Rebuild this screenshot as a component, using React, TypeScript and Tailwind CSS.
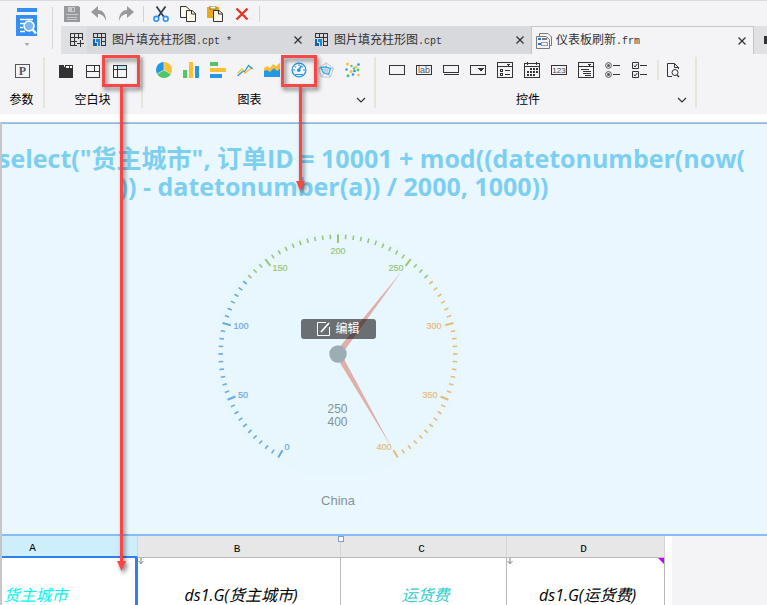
import React from "react";

const INK = "#333333";

function Icon({ children, label, crisp = true }: { children: React.ReactNode; label: string; crisp?: boolean }) {
    return (
        <button type="button" aria-label={label} className="w-4 h-4 shrink-0">
            <svg width="16" height="16" viewBox="0 0 16 16" fill="none" stroke={INK} shapeRendering={crisp ? "crispEdges" : "auto"}>
                {children}
            </svg>
        </button>
    );
}

function Close({ name }: { name: string }) {
    return (
        <button type="button" aria-label={"close " + name} className="w-2 h-2 shrink-0">
            <svg width="8" height="8" viewBox="0 0 8 8" stroke={INK} strokeWidth="1.3">
                <path d="M0.5 0.5L7.5 7.5M7.5 0.5L0.5 7.5" />
            </svg>
        </button>
    );
}

function CptIcon() {
    return (
        <svg width="14" height="14" viewBox="0 0 14 14" fill="none" className="shrink-0" shapeRendering="crispEdges">
            <path d="M0.5 5V0.5H12.5V12.5H8M0 4.5H12M4.5 0V4M8.5 0V13M9 8.5H12" stroke={INK} />
            <path d="M0 6H2V13H0zM2 10H4V13H2z" fill="#1d5fa8" />
            <path d="M3 6H7V13H5V9H3z" fill="#1a8ad6" />
        </svg>
    );
}

function FrmIcon() {
    return (
        <svg width="16" height="16" viewBox="0 0 16 16" fill="none" className="shrink-0">
            <path d="M3.5 3V0.5H12L15.5 4V12.5H13" stroke="#77797d" />
            <path d="M0.5 3.5H10L13.5 6.5V15.5H0.5z" fill="#f4f4f7" stroke="#77797d" />
            <path d="M2 5H5V7H2zM2 10H5V12H2z" fill="#2a76c4" />
            <rect x="6.5" y="5.5" width="4" height="1" stroke="#77797d" />
            <rect x="5.5" y="9.5" width="6" height="3" stroke="#9a9ca0" />
        </svg>
    );
}

function Tab({ icon, title, ext, active }: { icon: React.ReactNode; title: string; ext: string; active?: boolean }) {
    return (
        <div className={active ? "w-[222px] shrink-0 flex items-center gap-1 pl-1 pr-[7px] bg-[#f4f4f7] border-l border-t border-[#c6c7cb]" : "w-[222px] shrink-0 flex items-center gap-[5px] pl-[6px] pr-[7px]"}>
            {icon}
            <button type="button" className="grow text-left text-xs text-[#333333] whitespace-pre">
                {title}<span className="font-['Liberation_Mono'] text-[10px]">{ext}</span>
            </button>
            <Close name={title} />
        </div>
    );
}

function Chevron({ label }: { label: string }) {
    return (
        <button type="button" aria-label={label} className="absolute right-2 bottom-1 w-[10px] h-2">
            <svg width="10" height="8" viewBox="0 0 10 8" fill="none" stroke={INK} strokeWidth="1.2">
                <path d="M1 2L5 6L9 2" />
            </svg>
        </button>
    );
}

function Group({ name, className, more, children }: { name: string; className: string; more?: boolean; children: React.ReactNode }) {
    return (
        <section className={"relative shrink-0 h-[51px] flex flex-col justify-between border-r-2 border-[#e6e5dc] " + className}>
            <div className="flex gap-[11px] pt-[5px]">{children}</div>
            <span className="text-center text-xs leading-4 text-black">{name}</span>
            {more && <Chevron label={name} />}
        </section>
    );
}

function QuickBar() {
    return (
        <div className="h-[25px] flex items-center gap-[11px] pl-[3px]">
            <Icon label="save">
                <path d="M0 0H14L16 2V16H0z" fill="#98999d" stroke="none" />
                <path d="M4 1H11V6H4z" fill="#c9cacd" stroke="none" />
                <path d="M8 2H10V5H8z" fill="#98999d" stroke="none" />
                <path d="M2 8.5H14M3 11.5H13M3 13.5H13" stroke="#c9cacd" />
            </Icon>
            <Icon label="undo" crisp={false}>
                <path d="M0 6L7 0V4C12 4 15 8 15 15C13 10 11 8 7 8V12z" fill="#98999d" stroke="none" />
            </Icon>
            <Icon label="redo" crisp={false}>
                <path d="M16 6L9 0V4C4 4 1 8 1 15C3 10 5 8 9 8V12z" fill="#98999d" stroke="none" />
            </Icon>
            <div className="w-px h-4 bg-[#d2d3d6] -mx-[2px]" />
            <Icon label="cut" crisp={false}>
                <path d="M3.5 0.5L11 11M12.5 0.5L5 11" stroke="#333f4c" strokeWidth="1.8" />
                <circle cx="3.3" cy="12.8" r="2.4" stroke="#2f92ee" strokeWidth="1.6" />
                <circle cx="12.7" cy="12.8" r="2.4" stroke="#2f92ee" strokeWidth="1.6" />
            </Icon>
            <Icon label="copy" crisp={false}>
                <path d="M0.5 0.5H6L9.5 3.5V11.5H0.5z" fill="#fdfaec" />
                <path d="M6.5 4.5H12L15.5 7.5V15.5H6.5z" fill="#fdfaec" />
                <path d="M11.5 4.5V8H15.5" />
            </Icon>
            <Icon label="paste" crisp={false}>
                <path d="M0 1H12V12H0z" fill="#eda91a" stroke="none" />
                <path d="M3 0H9V3H3z" fill="#f8f1dc" stroke="#6d5930" strokeWidth="0.7" />
                <path d="M6.5 4.5H12L15.5 7.5V15.5H6.5z" fill="#fdfaec" />
                <path d="M11.5 4.5V8H15.5" />
            </Icon>
            <Icon label="delete" crisp={false}>
                <path d="M2.5 2.5L13.5 13.5M13.5 2.5L2.5 13.5" stroke="#e6342c" strokeWidth="2.4" />
            </Icon>
            <div className="w-px h-4 bg-[#d2d3d6] -ml-[2px]" />
        </div>
    );
}

function Header() {
    return (
        <header className="flex h-[54px] border-t border-[#d9dadd]">
            <div className="w-[53px] shrink-0 py-[6px]">
                <button type="button" aria-label="menu" className="w-full h-[42px] flex justify-center border-r border-[#d6d7da]">
                    <svg width="22" height="40" viewBox="0 0 22 40" fill="none" className="ml-[2px]">
                        <path d="M1 1H21V5H1zM0 8H21V29H0z" fill="#3390f2" />
                        <path d="M4 12.5H17M4 16.5H8M4 20.5H7M4 24.5H9" stroke="#fff" strokeWidth="1.6" />
                        <circle cx="13" cy="19" r="5" fill="#78b8f8" stroke="#fff" strokeWidth="1.6" />
                        <path d="M16.5 22.5L20 26.5" stroke="#fff" strokeWidth="2.4" />
                        <path d="M8.5 36H13.5L11 39z" fill="#a9aaae" />
                    </svg>
                </button>
            </div>
            <div className="grow min-w-0 pl-2 flex flex-col">
                <QuickBar />
                <nav className="flex h-7 bg-[#d8d9dd] overflow-hidden">
                    <button type="button" aria-label="new" className="w-[26px] shrink-0 flex items-center justify-center bg-[#dfe0e3]">
                        <svg width="14" height="14" viewBox="0 0 14 14" fill="none" stroke={INK} className="ml-[6px]" shapeRendering="crispEdges">
                            <path d="M7 12.5H0.5V0.5H12.5V7M0 4.5H13M0 8.5H7M4.5 0V13M8.5 0V6M10.5 7V14M7 10.5H14" />
                        </svg>
                    </button>
                    <Tab icon={<CptIcon />} title="图片填充柱形图" ext=".cpt *" />
                    <Tab icon={<CptIcon />} title="图片填充柱形图" ext=".cpt" />
                    <Tab icon={<FrmIcon />} title="仪表板刷新" ext=".frm" active />
                    <button type="button" aria-label="tab list" className="grow flex items-center pl-[10px] bg-[#e1e1e3] border-l border-[#c6c7cb]">
                        <span className="w-2 h-2 shrink-0 bg-[#333333]" />
                    </button>
                </nav>
            </div>
        </header>
    );
}

function Ribbon() {
    return (
        <div className="flex h-[60px] pt-[3px] overflow-hidden">
            <Group name="参数" className="w-[45px] pl-[15px] [&>span]:-ml-[15px]">
                <Icon label="parameter">
                    <rect x="0.5" y="2.5" width="14" height="13" stroke="#55565a" />
                    <text x="7.5" y="13" textAnchor="middle" fontSize="12" fontWeight="bold" fontFamily="Liberation Serif" fill="#55565a" stroke="none">P</text>
                </Icon>
            </Group>
            <Group name="空白块" className="w-[98px] pl-[13px] [&>span]:-ml-[14px]">
                <Icon label="tab block">
                    <path d="M1 3H6V5H15V16H1z" fill={INK} stroke="none" />
                    <path d="M7.5 3.5H14.5V6.5H7.5zM11 3V7" fill="#fff" />
                </Icon>
                <Icon label="absolute block">
                    <path d="M1.5 3.5H14.5V15.5H1.5zM1 9.5H15M9.5 3V9" />
                </Icon>
                <Icon label="report block">
                    <path d="M5 3H15V7H5z" fill="#bfe6fa" stroke="none" />
                    <path d="M1.5 3.5H14.5V15.5H1.5zM1 7.5H15M5.5 3V16" />
                </Icon>
            </Group>
            <Group name="图表" className="w-[233px] pl-[13px] [&>span]:-ml-[31px]" more>
                <Icon label="pie" crisp={false}>
                    <path d="M8 8V0A8 8 0 0 1 14.9 12z" fill="#f9bf35" stroke="none" />
                    <path d="M8 8V0A8 8 0 0 0 1.1 12z" fill="#2497e3" stroke="none" />
                    <path d="M8 8L1.1 12A8 8 0 0 0 14.9 12z" fill="#52c564" stroke="none" />
                    <path d="M8 0V8L1.1 12M8 8L14.9 12" stroke="#f4f4f7" strokeWidth="0.6" />
                </Icon>
                <Icon label="column">
                    <path d="M0 8H4V16H0z" fill="#52c564" stroke="none" />
                    <path d="M6 0H10V16H6z" fill="#f9bf35" stroke="none" />
                    <path d="M12 4H16V16H12z" fill="#2497e3" stroke="none" />
                </Icon>
                <Icon label="bar">
                    <path d="M0 0H8V4H0z" fill="#52c564" stroke="none" />
                    <path d="M0 6H16V10H0z" fill="#f9bf35" stroke="none" />
                    <path d="M0 12H12V16H0z" fill="#2497e3" stroke="none" />
                </Icon>
                <Icon label="line" crisp={false}>
                    <path d="M0.5 11.5L5 7L8 11L15.5 5" stroke="#f9bf35" strokeWidth="1.3" />
                    <path d="M0.5 14L5 10L8 9L11.5 3.5L15.5 7" stroke="#2497e3" strokeWidth="1.3" />
                </Icon>
                <Icon label="area" crisp={false}>
                    <path d="M0 6L3 4L6 6L9 2L12 4L16 1V11H0z" fill="#f9bf35" stroke="none" />
                    <path d="M0 9L3 8L6 10L10 6L13 9L16 7V15H0z" fill="#2497e3" stroke="none" />
                </Icon>
                <Icon label="gauge" crisp={false}>
                    <circle cx="8" cy="8" r="6.9" stroke="#2497e3" strokeWidth="1.3" />
                    <path d="M8 1V4M2 8H4M12 8H14M3.5 4L5 5.2M12.5 4L11 5.2M4 12.5H12" stroke="#2497e3" />
                    <path d="M7.8 8L10.5 3.5" stroke="#2497e3" strokeWidth="1.5" />
                    <circle cx="7.8" cy="8.2" r="1.8" fill="#2497e3" stroke="none" />
                </Icon>
                <Icon label="radar" crisp={false}>
                    <path d="M8 0.7L15.3 6.2L12.6 15H3.4L0.7 6.2zM8 0.7V8M15.3 6.2L8 8L12.6 15M3.4 15L8 8L0.7 6.2" stroke="#c3c6cb" />
                    <path d="M3 5.5L8 5L12.5 6.5L10.5 12.5L5.5 11z" stroke="#45aef0" strokeWidth="1.4" />
                    <path d="M6 8L8 6.5L10 8L9 10H7z" stroke="#9ed3f5" />
                </Icon>
                <Icon label="scatter" crisp={false}>
                    <g stroke="none" fill="#f9bf35">
                        <circle cx="2.5" cy="2" r="1.5" /><circle cx="11" cy="5" r="1.3" /><circle cx="6" cy="9.5" r="1.5" /><circle cx="13.5" cy="13" r="1.3" />
                    </g>
                    <g stroke="none" fill="#2497e3">
                        <circle cx="13.5" cy="2.5" r="1.3" /><circle cx="1.5" cy="7.5" r="1.2" /><circle cx="9.5" cy="9" r="1.3" /><circle cx="8" cy="12.5" r="1.3" />
                    </g>
                    <g stroke="none" fill="#52c564">
                        <circle cx="6.5" cy="4" r="1.2" /><circle cx="9" cy="6.5" r="1.2" /><circle cx="13" cy="8" r="1.4" /><circle cx="3" cy="13.8" r="1.5" />
                    </g>
                </Icon>
            </Group>
            <Group name="控件" className="w-[321px] pl-[13px] [&>span]:-ml-[28px]" more>
                <Icon label="text box"><rect x="0.5" y="3.5" width="15" height="9" /></Icon>
                <Icon label="label">
                    <rect x="0.5" y="3.5" width="15" height="9" />
                    <text x="8" y="11" textAnchor="middle" fontSize="9" fontFamily="Liberation Sans" fill="#55565a" stroke="none">lab</text>
                </Icon>
                <Icon label="button"><path d="M0.5 3.5H15.5V10.5H0.5zM1 12.5H16" /></Icon>
                <Icon label="combo box">
                    <rect x="0.5" y="3.5" width="15" height="9" />
                    <path d="M8 6H14L11 10z" fill={INK} stroke="none" />
                </Icon>
                <Icon label="check combo">
                    <path d="M0.5 0.5H15.5V15.5H0.5zM0 4.5H16M3.5 7.5H5.5V9.5H3.5zM3.5 11.5H5.5V13.5H3.5zM8 8.5H13M8 12.5H13" />
                    <path d="M10 2H13L11.5 4z" fill={INK} stroke="none" />
                </Icon>
                <Icon label="date">
                    <path d="M0.5 1.5H15.5V15.5H0.5zM0 4.5H16M3.5 0V3M12.5 0V3" />
                    <path d="M6 7H14M3 10H14M3 13H11" strokeWidth="2" strokeDasharray="2 1" />
                </Icon>
                <Icon label="number">
                    <rect x="0.5" y="3.5" width="15" height="9" />
                    <text x="8" y="11" textAnchor="middle" fontSize="8" fontFamily="Liberation Sans" fill="#444" stroke="none">123</text>
                </Icon>
                <Icon label="tree">
                    <path d="M0.5 0.5H15.5V15.5H0.5zM0 4.5H16M3 7.5H11M5 9.5H13M5 11.5H13M7 13.5H13" />
                    <path d="M10 2H13L11.5 4z" fill={INK} stroke="none" />
                </Icon>
                <Icon label="radio group" crisp={false}>
                    <circle cx="3.5" cy="3.5" r="2.9" stroke="#55565a" /><circle cx="3.5" cy="3.5" r="1.5" fill="#55565a" stroke="none" />
                    <circle cx="3.5" cy="12.5" r="2.9" stroke="#55565a" /><circle cx="3.5" cy="12.5" r="1.5" fill="#55565a" stroke="none" />
                    <path d="M8 3.5H15M8 12.5H15" />
                </Icon>
                <Icon label="check group" crisp={false}>
                    <path d="M0.5 0.5H6.5V6.5H0.5zM0.5 9.5H6.5V15.5H0.5z" />
                    <path d="M2 3.5L3 5L5.2 2M2 12.5L3 14L5.2 11M8 3.5H15M8 12.5H15" />
                </Icon>
                <div className="w-[2px] h-5 bg-[#e6e5dc] -ml-[2px] -mt-[2px] -mr-1" />
                <Icon label="query" crisp={false}>
                    <path d="M6 14.5H1.5V1.5H8.5L12.5 5.5V7M8.5 1.5V5.5H12.5" />
                    <circle cx="9" cy="10.5" r="3" />
                    <path d="M11 13L13 15" strokeWidth="1.5" />
                </Icon>
            </Group>
        </div>
    );
}

const gaugeLabels = [
    { value: 0, x: 77, y: 227, color: "#6aaade" },
    { value: 50, x: 33, y: 175, color: "#6aaade" },
    { value: 100, x: 31, y: 106, color: "#6aaade" },
    { value: 150, x: 70, y: 48, color: "#99c67a" },
    { value: 200, x: 128, y: 31, color: "#99c67a" },
    { value: 250, x: 186, y: 48, color: "#99c67a" },
    { value: 300, x: 224, y: 106, color: "#e6bb7a" },
    { value: 350, x: 220, y: 175, color: "#e6bb7a" },
    { value: 400, x: 174, y: 227, color: "#e6bb7a" },
];

function tickColor(i: number) {
    if (i <= 26) return "#6aaade";
    return i <= 53 ? "#99c67a" : "#e6bb7a";
}

function Gauge() {
    const ticks = Array.from({ length: 81 }, (_, i) => i);
    return (
        <div className="relative w-64 h-[252px]">
            <svg width="256" height="252" viewBox="0 0 256 252" fontFamily="Liberation Sans">
                <circle cx="128" cy="131" r="124" fill="#e8f6fd" />
                {ticks.map((i) => (
                    <line
                        key={i}
                        x1="128"
                        x2="128"
                        y1="11.5"
                        y2={i % 10 === 0 ? 20 : 16}
                        stroke={tickColor(i)}
                        strokeWidth={i % 10 === 0 ? 2 : 1.6}
                        transform={`rotate(${i * 3.75 - 150} 128 131)`}
                    />
                ))}
                {gaugeLabels.map((l) => (
                    <text key={l.value} x={l.x} y={l.y} textAnchor="middle" fontSize="9" fill={l.color} stroke={l.color} strokeWidth="0.2">{l.value}</text>
                ))}
                <path d="M125.5 129L192 48L130.5 133z" fill="#dfb0aa" />
                <path d="M125.5 132.5L182 225L130.5 129.5z" fill="#dfb0aa" />
                <circle cx="128" cy="131" r="8.7" fill="#9dadb4" />
                <text x="127.5" y="190" textAnchor="middle" fontSize="12" fill="#84939a">250</text>
                <text x="127.5" y="203" textAnchor="middle" fontSize="12" fill="#84939a">400</text>
            </svg>
            <button type="button" className="absolute left-[91px] top-24 w-[75px] h-5 rounded-[3px] bg-black/55 text-white text-xs flex items-center justify-center gap-[5px]">
                <svg width="13" height="14" viewBox="0 0 13 14" fill="none" stroke="#fff">
                    <path d="M9 0.5H0.5V13.5H12.5V5" />
                    <path d="M4 10L12 1" strokeWidth="1.6" />
                </svg>
                编辑
            </button>
        </div>
    );
}

function DownMark() {
    return (
        <svg width="6" height="7" viewBox="0 0 6 7" fill="none" stroke="#808080" className="absolute left-0 top-0">
            <path d="M3 0V6M0.5 3L3 5.5L5.5 3" />
        </svg>
    );
}

function Sheet() {
    return (
        <div className="flex bg-[#f4f4f7]">
            <div className="w-[670px] shrink-0 bg-white">
                <table className="w-[663px] table-fixed border-separate border-spacing-0 text-center">
                    <colgroup>
                        <col className="w-[136px]" />
                        <col className="w-[203px]" />
                        <col className="w-[166px]" />
                        <col className="w-[158px]" />
                    </colgroup>
                    <thead>
                        <tr className="h-[21px] bg-[#e7e7e7] font-['Liberation_Mono'] text-[11px] leading-4 text-black">
                            <th className="p-0 pt-1 pr-[74px] font-normal bg-[#cfeefb] border-r border-[#d4d5dc] border-b-2 border-b-[#2f80ed]">A</th>
                            <th className="relative p-0 pt-1 pr-1 font-normal border-r border-b border-[#d4d5dc] border-b-[#b9b9b9]">
                                B
                                <span className="absolute -right-1 top-0 w-[6px] h-[6px] border border-[#7f9fc2] bg-white" />
                            </th>
                            <th className="p-0 pt-1 pr-1 font-normal border-r border-b border-[#d4d5dc] border-b-[#b9b9b9]">C</th>
                            <th className="p-0 pt-1 pr-1 font-normal border-r border-b border-[#d4d5dc] border-b-[#b9b9b9]">D</th>
                        </tr>
                    </thead>
                    <tbody>
                        <tr className="h-[73px] italic text-base text-black">
                            <td className="p-0 pr-[66px] whitespace-nowrap text-[#00f6f6] border-r-[3px] border-[#2f80ed]">货主城市</td>
                            <td className="relative p-0 pl-1 border-r border-[#b9b9b9]"><DownMark />ds1.G(货主城市)</td>
                            <td className="p-0 pl-1 text-[#35cdcd] border-r border-[#b9b9b9]">运货费</td>
                            <td className="relative p-0 pl-1 border-r border-[#b9b9b9]">
                                <DownMark />
                                ds1.G(运货费)
                                <svg width="6" height="6" viewBox="0 0 6 6" className="absolute right-0 top-0">
                                    <path d="M0 0H6V6z" fill="#c800ff" />
                                </svg>
                            </td>
                        </tr>
                    </tbody>
                </table>
            </div>
        </div>
    );
}

// red call-outs from the ribbon icons down to the blocks they create
function Callouts() {
    return (
        <svg width="340" height="590" viewBox="0 0 340 590" fill="none" className="absolute left-0 top-0 pointer-events-none drop-shadow-[2px_3px_2px_rgba(0,0,0,0.5)]">
            <rect x="103.5" y="56.5" width="35" height="29" stroke="#fb4646" strokeWidth="3" />
            <path d="M121.5 87V563" stroke="#fb4646" strokeWidth="3" />
            <path d="M117 561H126L121.5 571z" fill="#fb4646" />
            <rect x="282.5" y="56.5" width="33" height="29" stroke="#fb4646" strokeWidth="3" />
            <path d="M300.5 87V183" stroke="#fb4646" strokeWidth="3" />
            <path d="M296 181H305L300.5 191z" fill="#fb4646" />
        </svg>
    );
}

export default function App() {
    return (
        <div className="relative h-screen overflow-hidden bg-[#f4f4f7] font-['Open_Sans','Noto_Sans_CJK_SC',sans-serif]">
            <Header />
            <Ribbon />
            <main className="bg-white pt-2">
                <div className="border-l-2 border-[#c6c6c8]">
                    <section className="h-[414px] bg-[#eaf7fe] border-t border-t-[#c3c3c5] border-b-2 border-b-[#84bbf8] overflow-hidden">
                        <div className="border-t border-[#84bbf8]">
                            <div className="w-[672px] flex flex-col items-center">
                                <h1 className="w-full -ml-2 pt-5 text-center whitespace-nowrap font-bold text-[25px] leading-7 text-[#7ccff0]">
                                    select("货主城市", 订单ID = 10001 + mod((datetonumber(now(
                                    <br />
                                    )) - datetonumber(a)) / 2000, 1000))
                                </h1>
                                <div className="pt-[23px]"><Gauge /></div>
                                <p className="pt-[18px] font-['Liberation_Sans'] text-[13px] leading-4 text-[#84939a]">China</p>
                            </div>
                        </div>
                    </section>
                    <Sheet />
                </div>
            </main>
            <Callouts />
        </div>
    );
}
